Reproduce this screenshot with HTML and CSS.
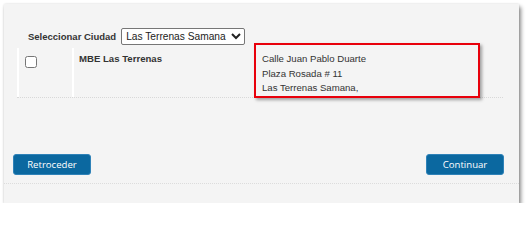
FILE: index.html
```
<!DOCTYPE html>
<html lang="es">
<head>
<meta charset="utf-8">
<link rel="stylesheet" href="styles.css">
</head>
<body>
<div class="panel">
  <div class="city-row">
    <label class="city-label" for="ciudad">Seleccionar Ciudad</label>
    <select id="ciudad" class="city-select">
      <option>Las Terrenas Samana</option>
    </select>
  </div>
  <div class="table">
    <div class="cell cell-check"><input type="checkbox" class="check"></div>
    <div class="cell cell-name">MBE Las Terrenas</div>
    <div class="cell cell-addr">Calle Juan Pablo Duarte<br>Plaza Rosada # 11<br>Las Terrenas Samana,</div>
  </div>
  <div class="highlight"></div>
  <div class="actions">
    <button class="btn">Retroceder</button>
    <button class="btn">Continuar</button>
  </div>
  <div class="footer"></div>
</div>
</body>
</html>
```
FILE: styles.css
```
html, body { margin: 0; padding: 0; background: #ffffff; }
body { padding: 4px 0 0 4px; font-family: "Liberation Sans", Arial, sans-serif; }
.panel {
  position: relative;
  width: 515px;
  height: 199px;
  box-sizing: border-box;
  background: #f4f4f4;
  box-shadow: 2px 3px 4px rgba(0,0,0,0.45), 0 0 2px rgba(0,0,0,0.12);
  padding-top: 24px;
}
.city-row {
  display: flex;
  align-items: center;
  gap: 5px;
  padding-left: 24px;
  height: 16px;
}
.city-label { font-size: 9.5px; font-weight: bold; color: #333; }
.city-select {
  font-family: "Liberation Sans", Arial, sans-serif;
  font-size: 10.2px;
  height: 17px;
  width: 124px;
  padding: 0;
  margin: 0;
  border: 1px solid #767676;
  border-radius: 2px;
  background: #fff;
  color: #222;
}
.table {
  display: flex;
  margin: 4px 0 0 13px;
  width: 486px;
  height: 50px;
  box-sizing: border-box;
  border-bottom: 1px dotted #d8d8d8;
}
.cell {
  border-left: 2px solid #ffffff;
  padding-top: 4px;
  box-sizing: border-box;
  font-size: 9.6px;
  line-height: 14.5px;
  color: #333;
}
.cell-check { width: 55px; padding-left: 6px; }
.check { margin: 4px 0 0 0; width: 12px; height: 12px; }
.cell-name { width: 182px; padding-left: 5px; font-weight: bold; }
.cell-addr { border-left: none; padding-left: 8px; flex: 1; }
.highlight {
  position: absolute;
  left: 250px;
  top: 39px;
  width: 226px;
  height: 55px;
  box-sizing: border-box;
  border: 2px solid #e8000b;
  box-shadow: 2px 2px 3px rgba(0,0,0,0.35);
}
.actions {
  display: flex;
  justify-content: space-between;
  margin: 56px 15px 0 9px;
}
.btn {
  width: 78px;
  height: 21px;
  background: #0b68a0;
  border: 1px solid #2f82b8;
  border-radius: 3px;
  color: #fff;
  font-family: "Open Sans", sans-serif;
  font-size: 9.6px;
  padding: 0;
}
.footer {
  margin-top: 8px;
  border-top: 1px dotted #dcdcdc;
}
```
